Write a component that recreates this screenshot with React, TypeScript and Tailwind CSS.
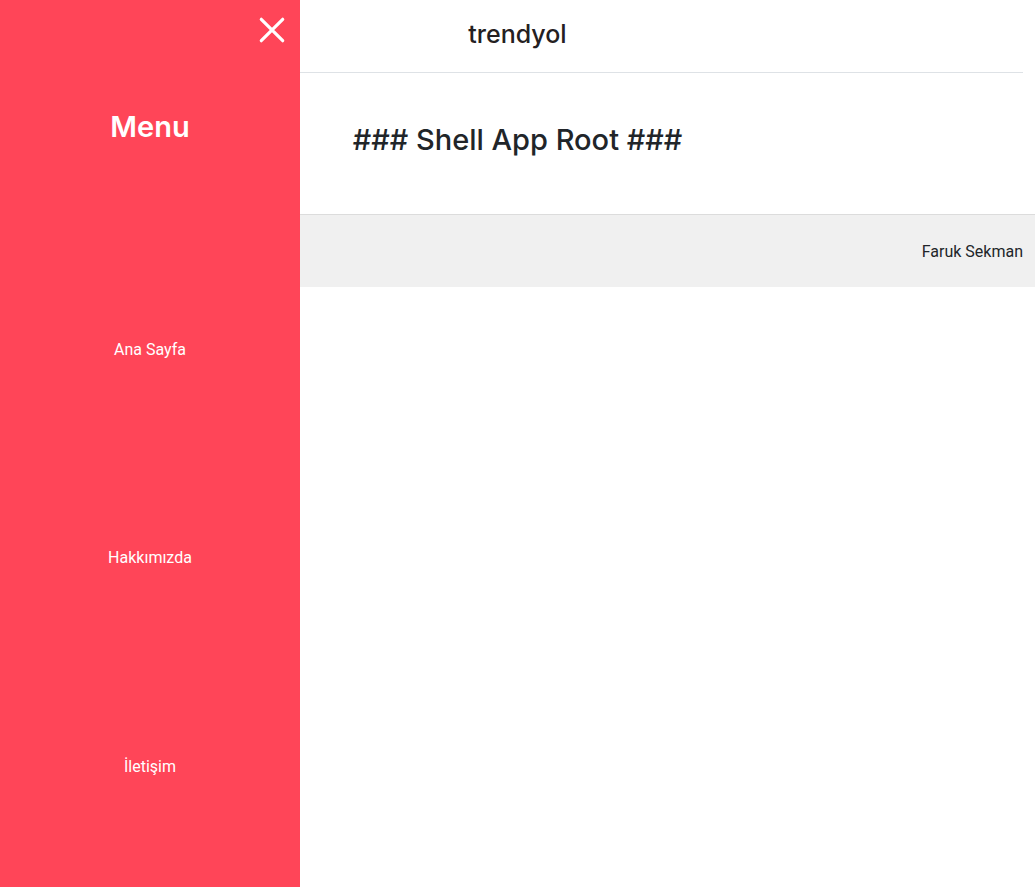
import { useState } from "react";

const links = [
  { label: "Ana Sayfa", href: "#ana-sayfa" },
  { label: "Hakkımızda", href: "#hakkimizda" },
  { label: "İletişim", href: "#iletisim" },
];

function Sidebar({ onClose }: { onClose: () => void }) {
  return (
    <aside className="fixed inset-y-0 left-0 flex w-[300px] flex-col bg-[#ff4558] pb-4 text-white">
      <div className="flex justify-end px-3 pt-3">
        <button type="button" aria-label="Kapat" onClick={onClose} className="cursor-pointer">
          <svg
            className="block size-8"
            viewBox="0 0 32 32"
            fill="none"
            stroke="currentColor"
            strokeWidth="3.2"
            strokeLinecap="round"
          >
            <path d="M5.3 7.3 26.7 28.7M26.7 7.3 5.3 28.7" />
          </svg>
        </button>
      </div>
      <h2 className="mt-16 text-center text-[29px] leading-[38px] font-semibold">Menu</h2>
      <nav className="mt-[100px] flex-1">
        <ul className="flex h-full flex-col justify-around text-center font-['Roboto',sans-serif] text-[16px] leading-[26px]">
          {links.map((link) => (
            <li key={link.href}>
              <a href={link.href}>{link.label}</a>
            </li>
          ))}
        </ul>
      </nav>
    </aside>
  );
}

export default function App() {
  const [open, setOpen] = useState(true);

  return (
    <div className="min-h-screen bg-white font-['Inter',sans-serif] text-[#212529]">
      <header className="px-3">
        <div className="flex h-[73px] items-center justify-center border-b border-[#dee2e6] pb-1">
          <a href="#ana-sayfa" className="text-[25px] leading-8 font-medium text-[#242021]">
            trendyol
          </a>
        </div>
      </header>
      <main className="px-3 pt-12 pb-[55px] text-center">
        <h1 className="text-[29px] leading-[38px] font-medium">### Shell App Root ###</h1>
      </main>
      <footer className="flex h-[73px] items-center justify-end border-t border-[#dcdcdc] bg-[#f0f0f0] px-3 pt-[2px] font-['Roboto',sans-serif] text-[16px] leading-6">
        Faruk Sekman
      </footer>
      {open && <Sidebar onClose={() => setOpen(false)} />}
    </div>
  );
}
